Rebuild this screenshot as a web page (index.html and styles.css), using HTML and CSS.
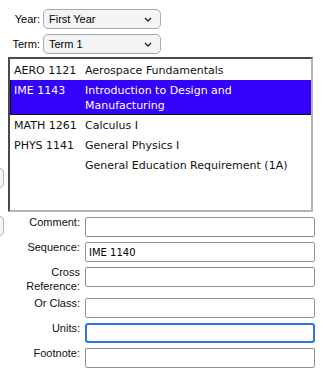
FILE: index.html
```html
<!DOCTYPE html>
<html lang="en">
<head>
  <meta charset="UTF-8" />
  <title>Course Planner</title>
  <link rel="stylesheet" href="styles.css">
</head>
<body>

  <!-- Year / term picker -->
  <div class="term-picker">
    <div class="pick-row">
      <span class="pick-label">Year:</span>
      <div class="select-box">
        <span>First Year</span>
        <svg width="8" height="5" viewBox="0 0 8 5"><path d="M1 1 L4 4 L7 1" fill="none" stroke="#222" stroke-width="1.4"/></svg>
      </div>
    </div>
    <div class="pick-row">
      <span class="pick-label">Term:</span>
      <div class="select-box">
        <span>Term 1</span>
        <svg width="8" height="5" viewBox="0 0 8 5"><path d="M1 1 L4 4 L7 1" fill="none" stroke="#222" stroke-width="1.4"/></svg>
      </div>
    </div>
  </div>

  <div class="main">
    <!-- side buttons, mostly off screen -->
    <div class="side-buttons">
      <button class="side-btn first"></button>
      <button class="side-btn"></button>
    </div>

    <div class="content">
      <div class="course-list">
        <div class="course"><span>AERO 1121</span><span>Aerospace Fundamentals</span></div>
        <div class="course selected"><span>IME 1143</span><span>Introduction to Design and Manufacturing</span></div>
        <div class="course"><span>MATH 1261</span><span>Calculus I</span></div>
        <div class="course"><span>PHYS 1141</span><span>General Physics I</span></div>
        <div class="course"><span></span><span>General Education Requirement (1A)</span></div>
      </div>

      <form class="details">
        <label class="field-label">Comment:</label>
        <input type="text" class="field" />
        <label class="field-label">Sequence:</label>
        <input type="text" class="field" value="IME 1140" />
        <label class="field-label">Cross<br>Reference:</label>
        <input type="text" class="field" />
        <label class="field-label">Or Class:</label>
        <input type="text" class="field" />
        <label class="field-label">Units:</label>
        <input type="text" class="field focused" />
        <label class="field-label">Footnote:</label>
        <input type="text" class="field" />
      </form>
    </div>
  </div>

</body>
</html>
```

FILE: styles.css
```css
body {
  margin: 0;
  background: #fff;
  font-family: "Liberation Sans", Arial, sans-serif;
  font-size: 11px;
  color: #000;
}
.term-picker {
  padding: 9px 0 0 8px;
  display: flex;
  flex-direction: column;
  gap: 5px;
}
.pick-row {
  display: flex;
  align-items: center;
  gap: 3px;
}
.pick-label {
  width: 32px;
  text-align: right;
}
.select-box {
  width: 118px;
  height: 20px;
  box-sizing: border-box;
  border: 1px solid #a9a9ae;
  border-radius: 5px;
  background: #f4f4f6;
  display: flex;
  align-items: center;
  justify-content: space-between;
  padding: 0 8px 0 5px;
}
.main {
  display: flex;
  gap: 4px;
  margin-top: 3px;
}
.side-buttons {
  width: 4px;
  overflow: hidden;
  display: flex;
  flex-direction: column;
}
.side-btn {
  width: 20px;
  height: 20px;
  margin-left: -16px;
  border: 1px solid #b5b5b8;
  border-radius: 4px;
  background: #f6f6f7;
  padding: 0;
}
.side-btn.first {
  margin-top: 111px;
  margin-bottom: 28px;
}
.content {
  display: flex;
  flex-direction: column;
  gap: 5px;
}
.course-list {
  width: 305px;
  height: 155px;
  box-sizing: border-box;
  border: 2px solid;
  border-color: #4a4a4a #b3b3b3 #b3b3b3 #4a4a4a;
  padding-top: 1px;
  font-family: "DejaVu Sans", Verdana, sans-serif;
  font-size: 11px;
  color: #111;
}
.course {
  display: grid;
  grid-template-columns: 71px 1fr;
  line-height: 15px;
  padding: 2.5px 6px 2.5px 4px;
}
.course.selected {
  background: #3300fa;
  color: #fff;
  border-left: 1px solid #111;
  border-bottom: 1px solid #111;
  padding: 2.5px 6px 1.5px 3px;
}
.details {
  display: grid;
  grid-template-columns: 72px 230px;
  column-gap: 5px;
  row-gap: 5px;
  align-items: start;
}
.field-label {
  text-align: right;
  line-height: 14px;
  margin-top: -2px;
  color: #111;
}
.field {
  height: 20px;
  box-sizing: border-box;
  margin: 0;
  border: 1px solid #8e8e93;
  border-radius: 2px;
  padding: 0 3px;
  font-family: "DejaVu Sans", Verdana, sans-serif;
  font-size: 10px;
  color: #000;
}
.field.focused {
  border: 2px solid #2d72ee;
  border-radius: 3px;
  outline: none;
}
```
